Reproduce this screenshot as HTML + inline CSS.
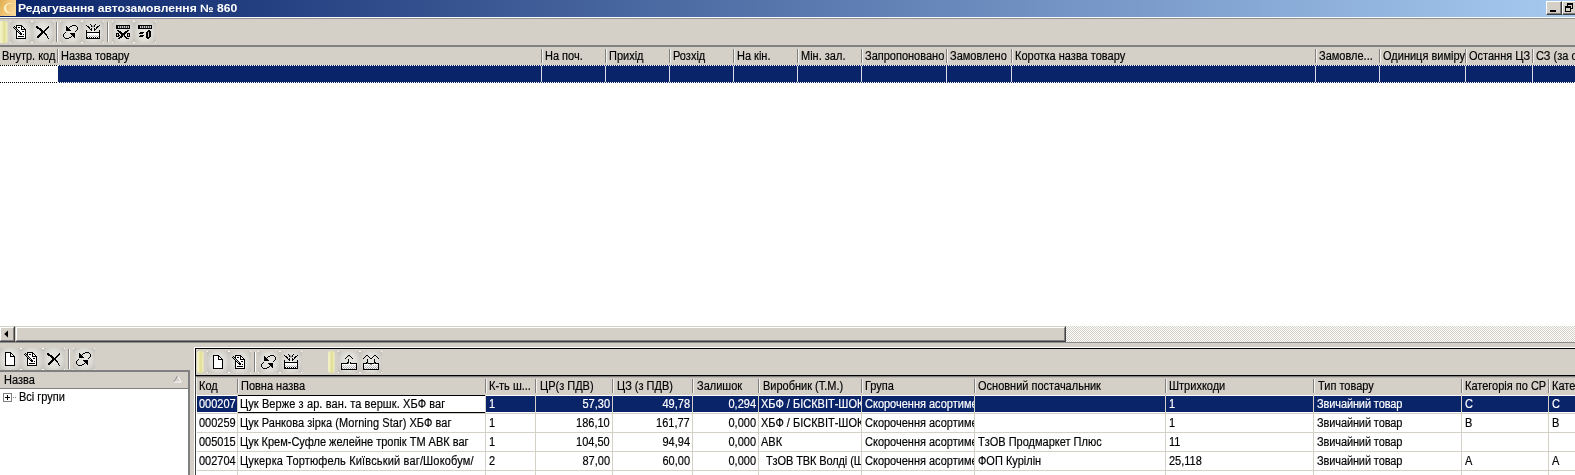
<!DOCTYPE html><html lang="uk"><head><meta charset="utf-8"><title>Редагування автозамовлення № 860</title><style>
*{margin:0;padding:0;box-sizing:border-box}
html,body{width:1575px;height:475px;overflow:hidden;background:#d4d0c8}
body{position:relative;font-family:"Liberation Sans","DejaVu Sans",sans-serif;font-size:11px;color:#000;line-height:13px}
.a{position:absolute}
.t{position:absolute;white-space:nowrap;height:13px;line-height:13px;overflow:hidden}
.w{color:#fff}
.s{display:inline-block;transform:scaleX(.9167);transform-origin:0 50%;font-size:12px;-webkit-text-stroke:0.18px currentColor}
.sr{display:inline-block;transform:scaleX(.9167);transform-origin:100% 50%;font-size:12px;-webkit-text-stroke:0.18px currentColor}
.btn{position:absolute;width:22px;height:22px;background:
 radial-gradient(circle at 0 0,#fff 0,#fff 1px,transparent 1.4px),
 radial-gradient(circle at 100% 0,#fff 0,#fff 1px,transparent 1.4px),
 radial-gradient(circle at 0 100%,#fff 0,#fff 1px,transparent 1.4px),
 radial-gradient(circle at 100% 100%,#fff 0,#fff 1px,transparent 1.4px),
 radial-gradient(ellipse 68% 85% at 50% 50%,#eae9e4 0,#e0ded8 45%,#c6c4bd 85%,#b9b7b0 100%)}
.btn svg{position:absolute;left:0;top:0;width:22px;height:22px}
.grip{position:absolute;width:8px;height:22px;border-radius:3px;background:linear-gradient(to right,#f3f1c8 0,#f0eebc 25%,#e4e29c 42%,#e2e098 65%,#eeecbc 82%,#dedbc2 100%)}
.sepv{position:absolute;width:2px;border-left:1px solid #808080;border-right:1px solid #fff}
.hsep{position:absolute;width:2px;height:14px;border-left:1px solid #808080;border-right:1px solid #f4f2ee}
.cell{position:absolute;height:18px;overflow:hidden;white-space:nowrap;line-height:18px;padding-top:0}
</style></head><body><div id="root" style="position:absolute;left:0;top:0;width:1575px;height:475px;overflow:hidden;will-change:transform">
<div class="a" style="left:0;top:0;width:1575px;height:17px;background:linear-gradient(to right,#0a246a 0,#a6caf0 100%)"></div>
<div class="a" style="left:0;top:17px;width:1575px;height:1px;background:#fff"></div>
<div class="a" style="left:0;top:18px;width:1575px;height:1px;background:#929292"></div>
<svg class="a" style="left:0;top:0" width="16" height="16" viewBox="0 0 16 16"><defs><linearGradient id="gi" x1="0" y1="0" x2="1" y2="0.4"><stop offset="0" stop-color="#e0ae50"/><stop offset="0.5" stop-color="#efc474"/><stop offset="1" stop-color="#f8d896"/></linearGradient></defs><rect width="16" height="16" fill="url(#gi)"/><path d="M12.4 3.3C7.6 2.2 4 5.2 4.1 8.4C4.2 11.8 7.8 14 11.8 12.6C8.4 13 6.1 11 6 8.3C5.9 5.6 8.2 3.4 12.4 3.3Z" fill="#fff6cc"/></svg>
<div class="t w" style="left:17.5px;top:2px;font-weight:bold;transform-origin:0 0;transform:scaleX(1.1)" id="title">Редагування автозамовлення № 860</div>
<div class="a" style="left:1546px;top:1px;width:16px;height:14px;background:#d4d0c8;border-top:1px solid #fff;border-left:1px solid #fff;border-right:1px solid #404040;border-bottom:1px solid #404040"><div class="a" style="left:0;top:0;right:0;bottom:0;border-right:1px solid #808080;border-bottom:1px solid #808080"></div><div class="a" style="left:3px;top:8px;width:6px;height:2px;background:#000"></div></div>
<div class="a" style="left:1562px;top:1px;width:16px;height:14px;background:#d4d0c8;border-top:1px solid #fff;border-left:1px solid #fff;border-right:1px solid #404040;border-bottom:1px solid #404040"><div class="a" style="left:0;top:0;right:0;bottom:0;border-right:1px solid #808080;border-bottom:1px solid #808080"></div><svg class="a" style="left:2px;top:1px" width="8" height="9" viewBox="0 0 8 9" shape-rendering="crispEdges"><path d="M2 0h6v2h-6zM2 2h1v1h-1zM7 2h1v4h-2v-1h1zM0 3h6v2h-6zM0 5h1v4h-1zM5 5h1v4h-1zM1 8h4v1h-4z" fill="#000"/></svg></div>
<div class="grip" style="left:0;top:21px;border-top-left-radius:0;border-bottom-left-radius:0"></div>
<div class="btn" style="left:10px;top:21px"><svg viewBox="0 0 22 22" shape-rendering="crispEdges"><path fill="#fff" d="M7 5h4v1h-4zM7 6h1v1h-1zM10 6h1v1h-1zM12 6h1v1h-1zM7 7h4v1h-4zM12 7h2v1h-2zM8 8h3v1h-3zM9 9h6v1h-6zM10 10h2v1h-2zM14 10h1v1h-1zM7 11h1v1h-1zM11 11h4v1h-4zM7 12h2v1h-2zM12 12h3v1h-3zM7 13h3v1h-3zM12 13h1v1h-1zM14 13h1v1h-1zM7 14h8v1h-8zM7 15h1v1h-1zM14 15h1v1h-1zM7 16h8v1h-8z"/><path fill="#c8c8c8" d="M4 6h1v1h-1zM5 7h1v1h-1zM6 8h1v1h-1zM7 9h1v1h-1zM8 10h1v1h-1zM9 11h1v1h-1z"/><path fill="#000" d="M6 4h6v1h-6zM4 5h1v1h-1zM6 5h1v1h-1zM11 5h2v1h-2zM3 6h1v1h-1zM5 6h2v1h-2zM8 6h2v1h-2zM11 6h1v1h-1zM13 6h1v1h-1zM4 7h1v1h-1zM6 7h1v1h-1zM11 7h1v1h-1zM14 7h1v1h-1zM5 8h1v1h-1zM7 8h1v1h-1zM11 8h5v1h-5zM6 9h1v1h-1zM8 9h1v1h-1zM15 9h1v1h-1zM6 10h2v1h-2zM9 10h1v1h-1zM12 10h2v1h-2zM15 10h1v1h-1zM6 11h1v1h-1zM8 11h1v1h-1zM10 11h1v1h-1zM15 11h1v1h-1zM6 12h1v1h-1zM9 12h3v1h-3zM15 12h1v1h-1zM6 13h1v1h-1zM10 13h2v1h-2zM13 13h1v1h-1zM15 13h1v1h-1zM6 14h1v1h-1zM15 14h1v1h-1zM6 15h1v1h-1zM8 15h6v1h-6zM15 15h1v1h-1zM6 16h1v1h-1zM15 16h1v1h-1zM6 17h10v1h-10z"/></svg></div>
<div class="btn" style="left:32px;top:21px"><svg viewBox="0 0 22 22" shape-rendering="crispEdges"><path fill="#000" d="M4 5h2v1h-2zM16 5h1v1h-1zM4 6h3v1h-3zM15 6h2v1h-2zM5 7h4v1h-4zM14 7h2v1h-2zM7 8h3v1h-3zM13 8h2v1h-2zM8 9h3v1h-3zM12 9h2v1h-2zM9 10h4v1h-4zM9 11h4v1h-4zM8 12h3v1h-3zM12 12h2v1h-2zM7 13h3v1h-3zM13 13h2v1h-2zM6 14h3v1h-3zM14 14h1v1h-1zM5 15h3v1h-3zM15 15h1v1h-1zM5 16h2v1h-2zM15 16h1v1h-1zM16 17h1v1h-1z"/></svg></div>
<div class="btn" style="left:60px;top:21px"><svg viewBox="0 0 22 22" shape-rendering="crispEdges"><path fill="#000" d="M12 4h4v1h-4zM6 5h1v1h-1zM10 5h2v1h-2zM16 5h1v1h-1zM6 6h2v1h-2zM9 6h1v1h-1zM17 6h1v1h-1zM6 7h3v1h-3zM17 7h1v1h-1zM6 8h4v1h-4zM17 8h1v1h-1zM6 9h5v1h-5zM16 9h1v1h-1zM15 10h1v1h-1zM5 11h1v1h-1zM4 12h1v1h-1zM10 12h5v1h-5zM3 13h1v1h-1zM11 13h4v1h-4zM3 14h1v1h-1zM12 14h3v1h-3zM3 15h1v1h-1zM11 15h1v1h-1zM13 15h2v1h-2zM4 16h1v1h-1zM9 16h2v1h-2zM14 16h1v1h-1zM5 17h4v1h-4z"/></svg></div>
<div class="btn" style="left:82px;top:21px"><svg viewBox="0 0 22 22" shape-rendering="crispEdges"><path fill="#fff" d="M10 10h2v1h-2zM5 12h12v1h-12zM5 13h12v1h-12zM6 14h1v1h-1zM8 14h1v1h-1zM10 14h1v1h-1zM12 14h1v1h-1zM14 14h1v1h-1zM16 14h1v1h-1zM5 15h1v1h-1zM7 15h1v1h-1zM9 15h1v1h-1zM11 15h1v1h-1zM13 15h1v1h-1zM15 15h1v1h-1zM6 16h1v1h-1zM8 16h1v1h-1zM10 16h1v1h-1zM12 16h1v1h-1zM14 16h1v1h-1zM16 16h1v1h-1z"/><path fill="#c8c8c8" d="M10 4h2v1h-2zM10 6h2v1h-2zM5 14h1v1h-1zM7 14h1v1h-1zM9 14h1v1h-1zM11 14h1v1h-1zM13 14h1v1h-1zM15 14h1v1h-1z"/><path fill="#a4a4a4" d="M6 15h1v1h-1zM8 15h1v1h-1zM10 15h1v1h-1zM12 15h1v1h-1zM14 15h1v1h-1zM16 15h1v1h-1z"/><path fill="#808080" d="M10 5h2v1h-2z"/><path fill="#000" d="M8 3h1v1h-1zM13 3h1v1h-1zM4 4h1v1h-1zM9 4h1v1h-1zM12 4h1v1h-1zM17 4h1v1h-1zM5 5h2v1h-2zM9 5h1v1h-1zM12 5h1v1h-1zM15 5h2v1h-2zM6 6h2v1h-2zM14 6h2v1h-2zM7 7h1v1h-1zM9 7h1v1h-1zM12 7h1v1h-1zM14 7h1v1h-1zM8 8h2v1h-2zM12 8h2v1h-2zM4 9h1v1h-1zM9 9h1v1h-1zM12 9h1v1h-1zM17 9h1v1h-1zM4 10h1v1h-1zM17 10h1v1h-1zM4 11h14v1h-14zM4 12h1v1h-1zM17 12h1v1h-1zM4 13h1v1h-1zM17 13h1v1h-1zM4 14h1v1h-1zM17 14h1v1h-1zM4 15h1v1h-1zM17 15h1v1h-1zM4 16h2v1h-2zM7 16h1v1h-1zM9 16h1v1h-1zM11 16h1v1h-1zM13 16h1v1h-1zM15 16h1v1h-1zM17 16h1v1h-1zM4 17h14v1h-14z"/></svg></div>
<div class="btn" style="left:112px;top:21px"><svg viewBox="0 0 22 22" shape-rendering="crispEdges"><path fill="#c8c8c8" d="M6 5h1v1h-1zM8 5h1v1h-1zM10 5h1v1h-1zM12 5h1v1h-1zM14 5h1v1h-1zM16 5h1v1h-1zM6 6h1v1h-1zM8 6h1v1h-1zM10 6h1v1h-1zM12 6h1v1h-1zM14 6h1v1h-1zM16 6h1v1h-1zM5 13h1v1h-1zM16 13h1v1h-1zM5 14h1v1h-1zM16 14h1v1h-1z"/><path fill="#808080" d="M11 14h1v1h-1z"/><path fill="#404040" d="M7 5h1v1h-1zM9 5h1v1h-1zM11 5h1v1h-1zM13 5h1v1h-1zM15 5h1v1h-1zM7 6h1v1h-1zM9 6h1v1h-1zM11 6h1v1h-1zM13 6h1v1h-1zM15 6h1v1h-1z"/><path fill="#000" d="M4 4h14v1h-14zM4 5h2v1h-2zM17 5h1v1h-1zM4 6h2v1h-2zM17 6h1v1h-1zM4 7h14v1h-14zM5 9h2v1h-2zM15 9h2v1h-2zM6 10h3v1h-3zM13 10h3v1h-3zM7 11h3v1h-3zM12 11h3v1h-3zM4 12h3v1h-3zM8 12h6v1h-6zM15 12h3v1h-3zM4 13h1v1h-1zM6 13h1v1h-1zM9 13h4v1h-4zM15 13h1v1h-1zM17 13h1v1h-1zM4 14h1v1h-1zM6 14h2v1h-2zM9 14h2v1h-2zM12 14h1v1h-1zM15 14h1v1h-1zM17 14h1v1h-1zM4 15h3v1h-3zM8 15h3v1h-3zM12 15h2v1h-2zM15 15h3v1h-3zM7 16h3v1h-3zM13 16h2v1h-2zM6 17h2v1h-2zM14 17h3v1h-3z"/></svg></div>
<div class="btn" style="left:134px;top:21px"><svg viewBox="0 0 22 22" shape-rendering="crispEdges"><path fill="#c8c8c8" d="M6 5h1v1h-1zM8 5h1v1h-1zM10 5h1v1h-1zM12 5h1v1h-1zM14 5h1v1h-1zM16 5h1v1h-1zM6 6h1v1h-1zM8 6h1v1h-1zM10 6h1v1h-1zM12 6h1v1h-1zM14 6h1v1h-1zM16 6h1v1h-1zM14 11h1v1h-1zM14 12h1v1h-1zM14 13h1v1h-1zM14 14h1v1h-1zM14 15h1v1h-1z"/><path fill="#404040" d="M7 5h1v1h-1zM9 5h1v1h-1zM11 5h1v1h-1zM13 5h1v1h-1zM15 5h1v1h-1zM7 6h1v1h-1zM9 6h1v1h-1zM11 6h1v1h-1zM13 6h1v1h-1zM15 6h1v1h-1z"/><path fill="#000" d="M4 4h14v1h-14zM4 5h2v1h-2zM17 5h1v1h-1zM4 6h2v1h-2zM17 6h1v1h-1zM4 7h14v1h-14zM14 9h2v1h-2zM13 10h4v1h-4zM6 11h4v1h-4zM12 11h2v1h-2zM15 11h2v1h-2zM5 12h4v1h-4zM12 12h2v1h-2zM15 12h2v1h-2zM12 13h2v1h-2zM15 13h2v1h-2zM6 14h4v1h-4zM12 14h2v1h-2zM15 14h2v1h-2zM5 15h4v1h-4zM12 15h2v1h-2zM15 15h2v1h-2zM12 16h4v1h-4zM13 17h2v1h-2z"/></svg></div>
<div class="sepv" style="left:56px;top:22px;height:20px"></div>
<div class="sepv" style="left:107px;top:22px;height:20px"></div>
<div class="a" style="left:0;top:45px;width:1575px;height:2px;background:#808080"></div>
<div class="a" style="left:0;top:47px;width:1575px;height:18px;background:#d4d0c8"></div>
<div class="t" id="th0" style="left:2px;top:50px;width:55px"><span class="s">Внутр. код</span></div>
<div class="t" id="th1" style="left:61px;top:50px;width:480px"><span class="s">Назва товару</span></div>
<div class="t" id="th2" style="left:545px;top:50px;width:60px"><span class="s">На поч.</span></div>
<div class="t" id="th3" style="left:609px;top:50px;width:60px"><span class="s">Прихід</span></div>
<div class="t" id="th4" style="left:673px;top:50px;width:60px"><span class="s">Розхід</span></div>
<div class="t" id="th5" style="left:737px;top:50px;width:60px"><span class="s">На кін.</span></div>
<div class="t" id="th6" style="left:801px;top:50px;width:60px"><span class="s">Мін. зал.</span></div>
<div class="t" id="th7" style="left:865px;top:50px;width:81px"><span class="s">Запропоновано</span></div>
<div class="t" id="th8" style="left:950px;top:50px;width:61px"><span class="s">Замовлено</span></div>
<div class="t" id="th9" style="left:1015px;top:50px;width:300px"><span class="s">Коротка назва товару</span></div>
<div class="t" id="th10" style="left:1319px;top:50px;width:60px"><span class="s">Замовле...</span></div>
<div class="t" id="th11" style="left:1383px;top:50px;width:82px"><span class="s">Одиниця виміру</span></div>
<div class="t" id="th12" style="left:1469px;top:50px;width:63px"><span class="s">Остання ЦЗ</span></div>
<div class="t" id="th13" style="left:1536px;top:50px;width:64px"><span class="s">СЗ (за ост. 3 міс.)</span></div>
<div class="hsep" style="left:57px;top:49px"></div>
<div class="hsep" style="left:541px;top:49px"></div>
<div class="hsep" style="left:605px;top:49px"></div>
<div class="hsep" style="left:669px;top:49px"></div>
<div class="hsep" style="left:733px;top:49px"></div>
<div class="hsep" style="left:797px;top:49px"></div>
<div class="hsep" style="left:861px;top:49px"></div>
<div class="hsep" style="left:946px;top:49px"></div>
<div class="hsep" style="left:1011px;top:49px"></div>
<div class="hsep" style="left:1315px;top:49px"></div>
<div class="hsep" style="left:1379px;top:49px"></div>
<div class="hsep" style="left:1465px;top:49px"></div>
<div class="hsep" style="left:1532px;top:49px"></div>
<div class="a" style="left:0;top:65px;width:1575px;height:261px;background:#fff"></div>
<div class="a" style="left:58px;top:65px;width:1517px;height:18px;background:#0a246a"></div>
<div class="a" style="left:541px;top:66px;width:1px;height:16px;background:#dcdde4"></div>
<div class="a" style="left:605px;top:66px;width:1px;height:16px;background:#dcdde4"></div>
<div class="a" style="left:669px;top:66px;width:1px;height:16px;background:#dcdde4"></div>
<div class="a" style="left:733px;top:66px;width:1px;height:16px;background:#dcdde4"></div>
<div class="a" style="left:797px;top:66px;width:1px;height:16px;background:#dcdde4"></div>
<div class="a" style="left:861px;top:66px;width:1px;height:16px;background:#dcdde4"></div>
<div class="a" style="left:946px;top:66px;width:1px;height:16px;background:#dcdde4"></div>
<div class="a" style="left:1011px;top:66px;width:1px;height:16px;background:#dcdde4"></div>
<div class="a" style="left:1315px;top:66px;width:1px;height:16px;background:#dcdde4"></div>
<div class="a" style="left:1379px;top:66px;width:1px;height:16px;background:#dcdde4"></div>
<div class="a" style="left:1465px;top:66px;width:1px;height:16px;background:#dcdde4"></div>
<div class="a" style="left:1532px;top:66px;width:1px;height:16px;background:#dcdde4"></div>
<div class="a" style="left:0;top:65px;width:58px;height:1px;background:repeating-linear-gradient(to right,#000 0,#000 1px,#fff 1px,#fff 2px)"></div>
<div class="a" style="left:58px;top:65px;width:1517px;height:1px;background:repeating-linear-gradient(to right,#fff 0,#fff 1px,#0a246a 1px,#0a246a 2px)"></div>
<div class="a" style="left:0;top:82px;width:58px;height:1px;background:repeating-linear-gradient(to right,#000 0,#000 1px,#fff 1px,#fff 2px)"></div>
<div class="a" style="left:58px;top:82px;width:1517px;height:1px;background:repeating-linear-gradient(to right,#fff 0,#fff 1px,#0a246a 1px,#0a246a 2px)"></div>
<div class="a" style="left:0;top:326px;width:1575px;height:16px;background:repeating-conic-gradient(#fff 0 25%,#d4d0c8 0 50%) 0 0/2px 2px"></div>
<div class="a" style="left:-1px;top:326px;width:16px;height:16px;background:#d4d0c8;border-top:1px solid #d4d0c8;border-left:1px solid #d4d0c8;border-right:1px solid #404040;border-bottom:1px solid #404040"><div class="a" style="left:0;top:0;right:0;bottom:0;border-top:1px solid #fff;border-left:1px solid #fff;border-right:1px solid #808080;border-bottom:1px solid #808080"></div><svg class="a" style="left:3px;top:3px" width="8" height="8" viewBox="0 0 8 8"><path d="M5 0.5V7.5L1.2 4Z" fill="#000"/></svg></div>
<div class="a" style="left:15px;top:326px;width:1051px;height:16px;background:#d4d0c8;border-top:1px solid #d4d0c8;border-left:1px solid #d4d0c8;border-right:1px solid #404040;border-bottom:1px solid #404040"><div class="a" style="left:0;top:0;right:0;bottom:0;border-top:1px solid #fff;border-left:1px solid #fff;border-right:1px solid #808080;border-bottom:1px solid #808080"></div></div>
<div class="a" style="left:0;top:342px;width:1575px;height:1px;background:#8c8c8c"></div>
<div class="btn" style="left:-1px;top:348px"><svg viewBox="0 0 22 22" shape-rendering="crispEdges"><path fill="#fff" d="M7 5h4v1h-4zM7 6h4v1h-4zM12 6h1v1h-1zM7 7h4v1h-4zM12 7h2v1h-2zM7 8h4v1h-4zM7 9h8v1h-8zM7 10h8v1h-8zM7 11h8v1h-8zM7 12h8v1h-8zM7 13h8v1h-8zM7 14h8v1h-8zM7 15h8v1h-8zM7 16h8v1h-8z"/><path fill="#000" d="M6 4h6v1h-6zM6 5h1v1h-1zM11 5h2v1h-2zM6 6h1v1h-1zM11 6h1v1h-1zM13 6h1v1h-1zM6 7h1v1h-1zM11 7h1v1h-1zM14 7h1v1h-1zM6 8h1v1h-1zM11 8h5v1h-5zM6 9h1v1h-1zM15 9h1v1h-1zM6 10h1v1h-1zM15 10h1v1h-1zM6 11h1v1h-1zM15 11h1v1h-1zM6 12h1v1h-1zM15 12h1v1h-1zM6 13h1v1h-1zM15 13h1v1h-1zM6 14h1v1h-1zM15 14h1v1h-1zM6 15h1v1h-1zM15 15h1v1h-1zM6 16h1v1h-1zM15 16h1v1h-1zM6 17h10v1h-10z"/></svg></div>
<div class="btn" style="left:21px;top:348px"><svg viewBox="0 0 22 22" shape-rendering="crispEdges"><path fill="#fff" d="M7 5h4v1h-4zM7 6h1v1h-1zM10 6h1v1h-1zM12 6h1v1h-1zM7 7h4v1h-4zM12 7h2v1h-2zM8 8h3v1h-3zM9 9h6v1h-6zM10 10h2v1h-2zM14 10h1v1h-1zM7 11h1v1h-1zM11 11h4v1h-4zM7 12h2v1h-2zM12 12h3v1h-3zM7 13h3v1h-3zM12 13h1v1h-1zM14 13h1v1h-1zM7 14h8v1h-8zM7 15h1v1h-1zM14 15h1v1h-1zM7 16h8v1h-8z"/><path fill="#c8c8c8" d="M4 6h1v1h-1zM5 7h1v1h-1zM6 8h1v1h-1zM7 9h1v1h-1zM8 10h1v1h-1zM9 11h1v1h-1z"/><path fill="#000" d="M6 4h6v1h-6zM4 5h1v1h-1zM6 5h1v1h-1zM11 5h2v1h-2zM3 6h1v1h-1zM5 6h2v1h-2zM8 6h2v1h-2zM11 6h1v1h-1zM13 6h1v1h-1zM4 7h1v1h-1zM6 7h1v1h-1zM11 7h1v1h-1zM14 7h1v1h-1zM5 8h1v1h-1zM7 8h1v1h-1zM11 8h5v1h-5zM6 9h1v1h-1zM8 9h1v1h-1zM15 9h1v1h-1zM6 10h2v1h-2zM9 10h1v1h-1zM12 10h2v1h-2zM15 10h1v1h-1zM6 11h1v1h-1zM8 11h1v1h-1zM10 11h1v1h-1zM15 11h1v1h-1zM6 12h1v1h-1zM9 12h3v1h-3zM15 12h1v1h-1zM6 13h1v1h-1zM10 13h2v1h-2zM13 13h1v1h-1zM15 13h1v1h-1zM6 14h1v1h-1zM15 14h1v1h-1zM6 15h1v1h-1zM8 15h6v1h-6zM15 15h1v1h-1zM6 16h1v1h-1zM15 16h1v1h-1zM6 17h10v1h-10z"/></svg></div>
<div class="btn" style="left:43px;top:348px"><svg viewBox="0 0 22 22" shape-rendering="crispEdges"><path fill="#000" d="M4 5h2v1h-2zM16 5h1v1h-1zM4 6h3v1h-3zM15 6h2v1h-2zM5 7h4v1h-4zM14 7h2v1h-2zM7 8h3v1h-3zM13 8h2v1h-2zM8 9h3v1h-3zM12 9h2v1h-2zM9 10h4v1h-4zM9 11h4v1h-4zM8 12h3v1h-3zM12 12h2v1h-2zM7 13h3v1h-3zM13 13h2v1h-2zM6 14h3v1h-3zM14 14h1v1h-1zM5 15h3v1h-3zM15 15h1v1h-1zM5 16h2v1h-2zM15 16h1v1h-1zM16 17h1v1h-1z"/></svg></div>
<div class="btn" style="left:73px;top:348px"><svg viewBox="0 0 22 22" shape-rendering="crispEdges"><path fill="#000" d="M12 4h4v1h-4zM6 5h1v1h-1zM10 5h2v1h-2zM16 5h1v1h-1zM6 6h2v1h-2zM9 6h1v1h-1zM17 6h1v1h-1zM6 7h3v1h-3zM17 7h1v1h-1zM6 8h4v1h-4zM17 8h1v1h-1zM6 9h5v1h-5zM16 9h1v1h-1zM15 10h1v1h-1zM5 11h1v1h-1zM4 12h1v1h-1zM10 12h5v1h-5zM3 13h1v1h-1zM11 13h4v1h-4zM3 14h1v1h-1zM12 14h3v1h-3zM3 15h1v1h-1zM11 15h1v1h-1zM13 15h2v1h-2zM4 16h1v1h-1zM9 16h2v1h-2zM14 16h1v1h-1zM5 17h4v1h-4z"/></svg></div>
<div class="sepv" style="left:68px;top:349px;height:20px"></div>
<div class="a" style="left:0;top:370px;width:190px;height:110px;background:#fff;border-top:2px solid #808080;border-right:2px solid #808080"></div>
<div class="a" style="left:0;top:372px;width:188px;height:16px;background:#d4d0c8"></div>
<div class="a" style="left:0;top:388px;width:188px;height:1px;background:#808080"></div>
<div class="t" id="tn" style="left:4px;top:374px"><span class="s">Назва</span></div>
<svg class="a" style="left:173px;top:375px" width="9" height="8" viewBox="0 0 9 8"><path d="M4.5 0.8L8.2 7H0.8Z" fill="#d4d0c8" stroke="#fff" stroke-width="1"/><path d="M4.5 0.8L0.8 7" stroke="#808080" stroke-width="1" fill="none"/></svg>
<div class="a" style="left:3px;top:393px;width:9px;height:9px;border:1px solid #808080;background:#fff"><div class="a" style="left:1px;top:3px;width:5px;height:1px;background:#000"></div><div class="a" style="left:3px;top:1px;width:1px;height:5px;background:#000"></div></div>
<div class="a" style="left:13px;top:397px;width:4px;height:1px;background:repeating-linear-gradient(to right,#808080 0,#808080 1px,#fff 1px,#fff 2px)"></div>
<div class="t" id="tg" style="left:19px;top:391px"><span class="s">Всі групи</span></div>
<div class="a" style="left:194px;top:347px;width:1400px;height:140px;border-left:1px solid #fff;border-top:1px solid #fff"></div>
<div class="a" style="left:195px;top:348px;width:1400px;height:28px;border-left:1px solid #000;border-top:1px solid #000;border-bottom:1px solid #000"></div>
<div class="a" style="left:195px;top:376px;width:1px;height:100px;background:#404040"></div>
<div class="a" style="left:196px;top:394px;width:1px;height:100px;background:#fff"></div>
<div class="grip" style="left:197px;top:351px;width:7px;height:22px"></div>
<div class="btn" style="left:207px;top:351px"><svg viewBox="0 0 22 22" shape-rendering="crispEdges"><path fill="#fff" d="M7 5h4v1h-4zM7 6h4v1h-4zM12 6h1v1h-1zM7 7h4v1h-4zM12 7h2v1h-2zM7 8h4v1h-4zM7 9h8v1h-8zM7 10h8v1h-8zM7 11h8v1h-8zM7 12h8v1h-8zM7 13h8v1h-8zM7 14h8v1h-8zM7 15h8v1h-8zM7 16h8v1h-8z"/><path fill="#000" d="M6 4h6v1h-6zM6 5h1v1h-1zM11 5h2v1h-2zM6 6h1v1h-1zM11 6h1v1h-1zM13 6h1v1h-1zM6 7h1v1h-1zM11 7h1v1h-1zM14 7h1v1h-1zM6 8h1v1h-1zM11 8h5v1h-5zM6 9h1v1h-1zM15 9h1v1h-1zM6 10h1v1h-1zM15 10h1v1h-1zM6 11h1v1h-1zM15 11h1v1h-1zM6 12h1v1h-1zM15 12h1v1h-1zM6 13h1v1h-1zM15 13h1v1h-1zM6 14h1v1h-1zM15 14h1v1h-1zM6 15h1v1h-1zM15 15h1v1h-1zM6 16h1v1h-1zM15 16h1v1h-1zM6 17h10v1h-10z"/></svg></div>
<div class="btn" style="left:229px;top:351px"><svg viewBox="0 0 22 22" shape-rendering="crispEdges"><path fill="#fff" d="M7 5h4v1h-4zM7 6h1v1h-1zM10 6h1v1h-1zM12 6h1v1h-1zM7 7h4v1h-4zM12 7h2v1h-2zM8 8h3v1h-3zM9 9h6v1h-6zM10 10h2v1h-2zM14 10h1v1h-1zM7 11h1v1h-1zM11 11h4v1h-4zM7 12h2v1h-2zM12 12h3v1h-3zM7 13h3v1h-3zM12 13h1v1h-1zM14 13h1v1h-1zM7 14h8v1h-8zM7 15h1v1h-1zM14 15h1v1h-1zM7 16h8v1h-8z"/><path fill="#c8c8c8" d="M4 6h1v1h-1zM5 7h1v1h-1zM6 8h1v1h-1zM7 9h1v1h-1zM8 10h1v1h-1zM9 11h1v1h-1z"/><path fill="#000" d="M6 4h6v1h-6zM4 5h1v1h-1zM6 5h1v1h-1zM11 5h2v1h-2zM3 6h1v1h-1zM5 6h2v1h-2zM8 6h2v1h-2zM11 6h1v1h-1zM13 6h1v1h-1zM4 7h1v1h-1zM6 7h1v1h-1zM11 7h1v1h-1zM14 7h1v1h-1zM5 8h1v1h-1zM7 8h1v1h-1zM11 8h5v1h-5zM6 9h1v1h-1zM8 9h1v1h-1zM15 9h1v1h-1zM6 10h2v1h-2zM9 10h1v1h-1zM12 10h2v1h-2zM15 10h1v1h-1zM6 11h1v1h-1zM8 11h1v1h-1zM10 11h1v1h-1zM15 11h1v1h-1zM6 12h1v1h-1zM9 12h3v1h-3zM15 12h1v1h-1zM6 13h1v1h-1zM10 13h2v1h-2zM13 13h1v1h-1zM15 13h1v1h-1zM6 14h1v1h-1zM15 14h1v1h-1zM6 15h1v1h-1zM8 15h6v1h-6zM15 15h1v1h-1zM6 16h1v1h-1zM15 16h1v1h-1zM6 17h10v1h-10z"/></svg></div>
<div class="btn" style="left:258px;top:351px"><svg viewBox="0 0 22 22" shape-rendering="crispEdges"><path fill="#000" d="M12 4h4v1h-4zM6 5h1v1h-1zM10 5h2v1h-2zM16 5h1v1h-1zM6 6h2v1h-2zM9 6h1v1h-1zM17 6h1v1h-1zM6 7h3v1h-3zM17 7h1v1h-1zM6 8h4v1h-4zM17 8h1v1h-1zM6 9h5v1h-5zM16 9h1v1h-1zM15 10h1v1h-1zM5 11h1v1h-1zM4 12h1v1h-1zM10 12h5v1h-5zM3 13h1v1h-1zM11 13h4v1h-4zM3 14h1v1h-1zM12 14h3v1h-3zM3 15h1v1h-1zM11 15h1v1h-1zM13 15h2v1h-2zM4 16h1v1h-1zM9 16h2v1h-2zM14 16h1v1h-1zM5 17h4v1h-4z"/></svg></div>
<div class="btn" style="left:280px;top:351px"><svg viewBox="0 0 22 22" shape-rendering="crispEdges"><path fill="#fff" d="M10 10h2v1h-2zM5 12h12v1h-12zM5 13h12v1h-12zM6 14h1v1h-1zM8 14h1v1h-1zM10 14h1v1h-1zM12 14h1v1h-1zM14 14h1v1h-1zM16 14h1v1h-1zM5 15h1v1h-1zM7 15h1v1h-1zM9 15h1v1h-1zM11 15h1v1h-1zM13 15h1v1h-1zM15 15h1v1h-1zM6 16h1v1h-1zM8 16h1v1h-1zM10 16h1v1h-1zM12 16h1v1h-1zM14 16h1v1h-1zM16 16h1v1h-1z"/><path fill="#c8c8c8" d="M10 4h2v1h-2zM10 6h2v1h-2zM5 14h1v1h-1zM7 14h1v1h-1zM9 14h1v1h-1zM11 14h1v1h-1zM13 14h1v1h-1zM15 14h1v1h-1z"/><path fill="#a4a4a4" d="M6 15h1v1h-1zM8 15h1v1h-1zM10 15h1v1h-1zM12 15h1v1h-1zM14 15h1v1h-1zM16 15h1v1h-1z"/><path fill="#808080" d="M10 5h2v1h-2z"/><path fill="#000" d="M8 3h1v1h-1zM13 3h1v1h-1zM4 4h1v1h-1zM9 4h1v1h-1zM12 4h1v1h-1zM17 4h1v1h-1zM5 5h2v1h-2zM9 5h1v1h-1zM12 5h1v1h-1zM15 5h2v1h-2zM6 6h2v1h-2zM14 6h2v1h-2zM7 7h1v1h-1zM9 7h1v1h-1zM12 7h1v1h-1zM14 7h1v1h-1zM8 8h2v1h-2zM12 8h2v1h-2zM4 9h1v1h-1zM9 9h1v1h-1zM12 9h1v1h-1zM17 9h1v1h-1zM4 10h1v1h-1zM17 10h1v1h-1zM4 11h14v1h-14zM4 12h1v1h-1zM17 12h1v1h-1zM4 13h1v1h-1zM17 13h1v1h-1zM4 14h1v1h-1zM17 14h1v1h-1zM4 15h1v1h-1zM17 15h1v1h-1zM4 16h2v1h-2zM7 16h1v1h-1zM9 16h1v1h-1zM11 16h1v1h-1zM13 16h1v1h-1zM15 16h1v1h-1zM17 16h1v1h-1zM4 17h14v1h-14z"/></svg></div>
<div class="sepv" style="left:254px;top:352px;height:20px"></div>
<div class="grip" style="left:328px;top:351px;width:7px;height:22px"></div>
<div class="btn" style="left:338px;top:351px"><svg viewBox="0 0 22 22" shape-rendering="crispEdges"><path fill="#fff" d="M11 12h1v1h-1zM4 13h14v1h-14zM4 14h1v1h-1zM6 14h1v1h-1zM8 14h1v1h-1zM10 14h1v1h-1zM12 14h1v1h-1zM14 14h1v1h-1zM16 14h1v1h-1zM5 15h1v1h-1zM7 15h1v1h-1zM9 15h1v1h-1zM11 15h1v1h-1zM13 15h1v1h-1zM15 15h1v1h-1zM17 15h1v1h-1zM4 16h1v1h-1zM6 16h1v1h-1zM8 16h1v1h-1zM10 16h1v1h-1zM12 16h1v1h-1zM14 16h1v1h-1zM16 16h1v1h-1zM5 17h1v1h-1zM7 17h1v1h-1zM9 17h1v1h-1zM11 17h1v1h-1zM13 17h1v1h-1zM15 17h1v1h-1zM17 17h1v1h-1z"/><path fill="#c8c8c8" d="M10 5h2v1h-2zM5 14h1v1h-1zM7 14h1v1h-1zM9 14h1v1h-1zM11 14h1v1h-1zM13 14h1v1h-1zM15 14h1v1h-1zM17 14h1v1h-1zM4 15h1v1h-1zM6 15h1v1h-1zM8 15h1v1h-1zM10 15h1v1h-1zM12 15h1v1h-1zM14 15h1v1h-1zM16 15h1v1h-1z"/><path fill="#a4a4a4" d="M5 16h1v1h-1zM7 16h1v1h-1zM9 16h1v1h-1zM11 16h1v1h-1zM13 16h1v1h-1zM15 16h1v1h-1zM17 16h1v1h-1zM4 17h1v1h-1zM6 17h1v1h-1zM8 17h1v1h-1zM10 17h1v1h-1zM12 17h1v1h-1zM14 17h1v1h-1zM16 17h1v1h-1z"/><path fill="#808080" d="M10 12h1v1h-1z"/><path fill="#000" d="M10 4h2v1h-2zM9 5h1v1h-1zM12 5h1v1h-1zM8 6h1v1h-1zM13 6h1v1h-1zM7 7h1v1h-1zM14 7h1v1h-1zM10 8h1v1h-1zM10 9h1v1h-1zM10 10h1v1h-1zM9 11h2v1h-2zM12 11h1v1h-1zM3 12h7v1h-7zM12 12h7v1h-7zM3 13h1v1h-1zM18 13h1v1h-1zM3 14h1v1h-1zM18 14h1v1h-1zM3 15h1v1h-1zM18 15h1v1h-1zM3 16h1v1h-1zM18 16h1v1h-1zM3 17h1v1h-1zM18 17h1v1h-1zM3 18h16v1h-16z"/></svg></div>
<div class="btn" style="left:360px;top:351px"><svg viewBox="0 0 22 22" shape-rendering="crispEdges"><path fill="#fff" d="M4 13h6v1h-6zM12 13h6v1h-6zM4 14h1v1h-1zM6 14h1v1h-1zM8 14h1v1h-1zM10 14h1v1h-1zM12 14h1v1h-1zM14 14h1v1h-1zM16 14h1v1h-1zM5 15h1v1h-1zM7 15h1v1h-1zM9 15h1v1h-1zM11 15h1v1h-1zM13 15h1v1h-1zM15 15h1v1h-1zM17 15h1v1h-1zM4 16h1v1h-1zM6 16h1v1h-1zM8 16h1v1h-1zM10 16h1v1h-1zM12 16h1v1h-1zM14 16h1v1h-1zM16 16h1v1h-1zM5 17h1v1h-1zM7 17h1v1h-1zM9 17h1v1h-1zM11 17h1v1h-1zM13 17h1v1h-1zM15 17h1v1h-1zM17 17h1v1h-1z"/><path fill="#c8c8c8" d="M5 14h1v1h-1zM7 14h1v1h-1zM9 14h1v1h-1zM11 14h1v1h-1zM13 14h1v1h-1zM15 14h1v1h-1zM17 14h1v1h-1zM4 15h1v1h-1zM6 15h1v1h-1zM8 15h1v1h-1zM10 15h1v1h-1zM12 15h1v1h-1zM14 15h1v1h-1zM16 15h1v1h-1z"/><path fill="#a4a4a4" d="M5 16h1v1h-1zM7 16h1v1h-1zM9 16h1v1h-1zM11 16h1v1h-1zM13 16h1v1h-1zM15 16h1v1h-1zM17 16h1v1h-1zM4 17h1v1h-1zM6 17h1v1h-1zM8 17h1v1h-1zM10 17h1v1h-1zM12 17h1v1h-1zM14 17h1v1h-1zM16 17h1v1h-1z"/><path fill="#808080" d="M7 12h1v1h-1zM14 12h1v1h-1zM10 13h2v1h-2z"/><path fill="#000" d="M6 4h2v1h-2zM14 4h2v1h-2zM5 5h1v1h-1zM8 5h1v1h-1zM13 5h1v1h-1zM16 5h1v1h-1zM4 6h1v1h-1zM9 6h1v1h-1zM12 6h1v1h-1zM17 6h1v1h-1zM3 7h1v1h-1zM10 7h2v1h-2zM18 7h1v1h-1zM7 8h1v1h-1zM14 8h1v1h-1zM7 9h1v1h-1zM14 9h1v1h-1zM7 10h1v1h-1zM14 10h1v1h-1zM6 11h2v1h-2zM14 11h2v1h-2zM3 12h4v1h-4zM8 12h6v1h-6zM15 12h4v1h-4zM3 13h1v1h-1zM18 13h1v1h-1zM3 14h1v1h-1zM18 14h1v1h-1zM3 15h1v1h-1zM18 15h1v1h-1zM3 16h1v1h-1zM18 16h1v1h-1zM3 17h1v1h-1zM18 17h1v1h-1zM3 18h16v1h-16z"/></svg></div>
<div class="a" style="left:197px;top:376px;width:1378px;height:18px;background:#d4d0c8"></div>
<div class="a" style="left:196px;top:376px;width:1379px;height:1px;background:#808080"></div>
<div class="a" style="left:196px;top:377px;width:1px;height:17px;background:#ece9e2"></div>
<div class="a" style="left:197px;top:377px;width:1378px;height:1px;background:#bcb8b0"></div>
<div class="a" style="left:197px;top:394px;width:1378px;height:81px;background:#fff"></div>
<div class="t" id="bh0" style="left:199px;top:380px;width:38px"><span class="s">Код</span></div>
<div class="t" id="bh1" style="left:241px;top:380px;width:244px"><span class="s">Повна назва</span></div>
<div class="t" id="bh2" style="left:489px;top:380px;width:46px"><span class="s">К-ть ш...</span></div>
<div class="t" id="bh3" style="left:540px;top:380px;width:72px"><span class="s">ЦР(з ПДВ)</span></div>
<div class="t" id="bh4" style="left:617px;top:380px;width:75px"><span class="s">ЦЗ (з ПДВ)</span></div>
<div class="t" id="bh5" style="left:697px;top:380px;width:61px"><span class="s">Залишок</span></div>
<div class="t" id="bh6" style="left:763px;top:380px;width:98px"><span class="s">Виробник (Т.М.)</span></div>
<div class="t" id="bh7" style="left:865px;top:380px;width:109px"><span class="s">Група</span></div>
<div class="t" id="bh8" style="left:978px;top:380px;width:187px"><span class="s">Основний постачальник</span></div>
<div class="t" id="bh9" style="left:1169px;top:380px;width:144px"><span class="s">Штрихкоди</span></div>
<div class="t" id="bh10" style="left:1318px;top:380px;width:143px"><span class="s">Тип товару</span></div>
<div class="t" id="bh11" style="left:1465px;top:380px;width:83px"><span class="s">Категорія по СР</span></div>
<div class="t" id="bh12" style="left:1552px;top:380px;width:48px"><span class="s">Категорія</span></div>
<div class="hsep" style="left:237px;top:379px"></div>
<div class="hsep" style="left:485px;top:379px"></div>
<div class="hsep" style="left:535px;top:379px"></div>
<div class="hsep" style="left:612px;top:379px"></div>
<div class="hsep" style="left:692px;top:379px"></div>
<div class="hsep" style="left:758px;top:379px"></div>
<div class="hsep" style="left:861px;top:379px"></div>
<div class="hsep" style="left:974px;top:379px"></div>
<div class="hsep" style="left:1165px;top:379px"></div>
<div class="hsep" style="left:1313px;top:379px"></div>
<div class="hsep" style="left:1461px;top:379px"></div>
<div class="hsep" style="left:1548px;top:379px"></div>
<div class="a" style="left:197px;top:396px;width:1378px;height:16px;background:#0a246a"></div>
<div class="cell w" id="c0_0" style="left:197px;top:395px;width:40px;background:linear-gradient(#fff 0,#fff 1px,transparent 1px,transparent 17px,#fff 17px);padding-left:2px;"><span class="s">000207</span></div>
<div class="cell" id="c0_1" style="left:238px;top:395px;width:247px;background:#fff;padding-left:2px;letter-spacing:0.11px;"><span class="s">Цук Верже з ар. ван. та вершк. ХБФ ваг</span></div>
<div class="cell w" id="c0_2" style="left:486px;top:395px;width:49px;background:linear-gradient(#fff 0,#fff 1px,transparent 1px,transparent 17px,#fff 17px);padding-left:3px;"><span class="s">1</span></div>
<div class="cell w" id="c0_3" style="left:536px;top:395px;width:76px;background:linear-gradient(#fff 0,#fff 1px,transparent 1px,transparent 17px,#fff 17px);text-align:right;padding-right:2px;"><span class="sr">57,30</span></div>
<div class="cell w" id="c0_4" style="left:613px;top:395px;width:79px;background:linear-gradient(#fff 0,#fff 1px,transparent 1px,transparent 17px,#fff 17px);text-align:right;padding-right:2px;"><span class="sr">49,78</span></div>
<div class="cell w" id="c0_5" style="left:693px;top:395px;width:65px;background:linear-gradient(#fff 0,#fff 1px,transparent 1px,transparent 17px,#fff 17px);text-align:right;padding-right:2px;"><span class="sr">0,294</span></div>
<div class="cell w" id="c0_6" style="left:759px;top:395px;width:102px;background:linear-gradient(#fff 0,#fff 1px,transparent 1px,transparent 17px,#fff 17px);padding-left:2px;"><span class="s">ХБФ / БІСКВІТ-ШОКОЛАД</span></div>
<div class="cell w" id="c0_7" style="left:862px;top:395px;width:112px;background:linear-gradient(#fff 0,#fff 1px,transparent 1px,transparent 17px,#fff 17px);padding-left:3px;"><span class="s">Скорочення асортименту</span></div>
<div class="cell w" id="c0_8" style="left:975px;top:395px;width:190px;background:linear-gradient(#fff 0,#fff 1px,transparent 1px,transparent 17px,#fff 17px);padding-left:3px;"><span class="s"></span></div>
<div class="cell w" id="c0_9" style="left:1166px;top:395px;width:147px;background:linear-gradient(#fff 0,#fff 1px,transparent 1px,transparent 17px,#fff 17px);padding-left:3px;"><span class="s">1</span></div>
<div class="cell w" id="c0_10" style="left:1314px;top:395px;width:147px;background:linear-gradient(#fff 0,#fff 1px,transparent 1px,transparent 17px,#fff 17px);padding-left:3px;letter-spacing:-0.13px;"><span class="s">Звичайний товар</span></div>
<div class="cell w" id="c0_11" style="left:1462px;top:395px;width:86px;background:linear-gradient(#fff 0,#fff 1px,transparent 1px,transparent 17px,#fff 17px);padding-left:3px;"><span class="s">C</span></div>
<div class="cell w" id="c0_12" style="left:1549px;top:395px;width:51px;background:linear-gradient(#fff 0,#fff 1px,transparent 1px,transparent 17px,#fff 17px);padding-left:3px;"><span class="s">C</span></div>
<div class="a" style="left:197px;top:413px;width:1378px;height:1px;background:#d4d0c8"></div>
<div class="cell" id="c1_0" style="left:197px;top:414px;width:40px;padding-left:2px;"><span class="s">000259</span></div>
<div class="cell" id="c1_1" style="left:238px;top:414px;width:247px;padding-left:2px;letter-spacing:0.055px;"><span class="s">Цук Ранкова зірка (Morning Star) ХБФ ваг</span></div>
<div class="cell" id="c1_2" style="left:486px;top:414px;width:49px;padding-left:3px;"><span class="s">1</span></div>
<div class="cell" id="c1_3" style="left:536px;top:414px;width:76px;text-align:right;padding-right:2px;"><span class="sr">186,10</span></div>
<div class="cell" id="c1_4" style="left:613px;top:414px;width:79px;text-align:right;padding-right:2px;"><span class="sr">161,77</span></div>
<div class="cell" id="c1_5" style="left:693px;top:414px;width:65px;text-align:right;padding-right:2px;"><span class="sr">0,000</span></div>
<div class="cell" id="c1_6" style="left:759px;top:414px;width:102px;padding-left:2px;"><span class="s">ХБФ / БІСКВІТ-ШОКОЛАД</span></div>
<div class="cell" id="c1_7" style="left:862px;top:414px;width:112px;padding-left:3px;"><span class="s">Скорочення асортименту</span></div>
<div class="cell" id="c1_8" style="left:975px;top:414px;width:190px;padding-left:3px;"><span class="s"></span></div>
<div class="cell" id="c1_9" style="left:1166px;top:414px;width:147px;padding-left:3px;"><span class="s">1</span></div>
<div class="cell" id="c1_10" style="left:1314px;top:414px;width:147px;padding-left:3px;letter-spacing:-0.13px;"><span class="s">Звичайний товар</span></div>
<div class="cell" id="c1_11" style="left:1462px;top:414px;width:86px;padding-left:3px;"><span class="s">B</span></div>
<div class="cell" id="c1_12" style="left:1549px;top:414px;width:51px;padding-left:3px;"><span class="s">B</span></div>
<div class="a" style="left:197px;top:432px;width:1378px;height:1px;background:#d4d0c8"></div>
<div class="cell" id="c2_0" style="left:197px;top:433px;width:40px;padding-left:2px;"><span class="s">005015</span></div>
<div class="cell" id="c2_1" style="left:238px;top:433px;width:247px;padding-left:2px;"><span class="s">Цук Крем-Суфле желейне тропік ТМ АВК ваг</span></div>
<div class="cell" id="c2_2" style="left:486px;top:433px;width:49px;padding-left:3px;"><span class="s">1</span></div>
<div class="cell" id="c2_3" style="left:536px;top:433px;width:76px;text-align:right;padding-right:2px;"><span class="sr">104,50</span></div>
<div class="cell" id="c2_4" style="left:613px;top:433px;width:79px;text-align:right;padding-right:2px;"><span class="sr">94,94</span></div>
<div class="cell" id="c2_5" style="left:693px;top:433px;width:65px;text-align:right;padding-right:2px;"><span class="sr">0,000</span></div>
<div class="cell" id="c2_6" style="left:759px;top:433px;width:102px;padding-left:2px;"><span class="s">АВК</span></div>
<div class="cell" id="c2_7" style="left:862px;top:433px;width:112px;padding-left:3px;"><span class="s">Скорочення асортименту</span></div>
<div class="cell" id="c2_8" style="left:975px;top:433px;width:190px;padding-left:3px;"><span class="s">ТзОВ Продмаркет Плюс</span></div>
<div class="cell" id="c2_9" style="left:1166px;top:433px;width:147px;padding-left:3px;"><span class="s">11</span></div>
<div class="cell" id="c2_10" style="left:1314px;top:433px;width:147px;padding-left:3px;letter-spacing:-0.13px;"><span class="s">Звичайний товар</span></div>
<div class="cell" id="c2_11" style="left:1462px;top:433px;width:86px;padding-left:3px;"><span class="s"></span></div>
<div class="cell" id="c2_12" style="left:1549px;top:433px;width:51px;padding-left:3px;"><span class="s"></span></div>
<div class="a" style="left:197px;top:451px;width:1378px;height:1px;background:#d4d0c8"></div>
<div class="cell" id="c3_0" style="left:197px;top:452px;width:40px;padding-left:2px;"><span class="s">002704</span></div>
<div class="cell" id="c3_1" style="left:238px;top:452px;width:247px;padding-left:2px;letter-spacing:0.18px;"><span class="s">Цукерка Тортюфель Київський ваг/Шокобум/</span></div>
<div class="cell" id="c3_2" style="left:486px;top:452px;width:49px;padding-left:3px;"><span class="s">2</span></div>
<div class="cell" id="c3_3" style="left:536px;top:452px;width:76px;text-align:right;padding-right:2px;"><span class="sr">87,00</span></div>
<div class="cell" id="c3_4" style="left:613px;top:452px;width:79px;text-align:right;padding-right:2px;"><span class="sr">60,00</span></div>
<div class="cell" id="c3_5" style="left:693px;top:452px;width:65px;text-align:right;padding-right:2px;"><span class="sr">0,000</span></div>
<div class="cell" id="c3_6" style="left:759px;top:452px;width:102px;padding-left:2px;padding-left:7px;letter-spacing:-0.12px;"><span class="s">ТзОВ ТВК Волді (Шокобум)</span></div>
<div class="cell" id="c3_7" style="left:862px;top:452px;width:112px;padding-left:3px;"><span class="s">Скорочення асортименту</span></div>
<div class="cell" id="c3_8" style="left:975px;top:452px;width:190px;padding-left:3px;"><span class="s">ФОП Курілін</span></div>
<div class="cell" id="c3_9" style="left:1166px;top:452px;width:147px;padding-left:3px;"><span class="s">25,118</span></div>
<div class="cell" id="c3_10" style="left:1314px;top:452px;width:147px;padding-left:3px;letter-spacing:-0.13px;"><span class="s">Звичайний товар</span></div>
<div class="cell" id="c3_11" style="left:1462px;top:452px;width:86px;padding-left:3px;"><span class="s">A</span></div>
<div class="cell" id="c3_12" style="left:1549px;top:452px;width:51px;padding-left:3px;"><span class="s">A</span></div>
<div class="a" style="left:197px;top:470px;width:1378px;height:1px;background:#d4d0c8"></div>
<div class="a" style="left:237px;top:394px;width:1px;height:81px;background:#d4d0c8"></div>
<div class="a" style="left:485px;top:394px;width:1px;height:81px;background:#d4d0c8"></div>
<div class="a" style="left:535px;top:394px;width:1px;height:81px;background:#d4d0c8"></div>
<div class="a" style="left:612px;top:394px;width:1px;height:81px;background:#d4d0c8"></div>
<div class="a" style="left:692px;top:394px;width:1px;height:81px;background:#d4d0c8"></div>
<div class="a" style="left:758px;top:394px;width:1px;height:81px;background:#d4d0c8"></div>
<div class="a" style="left:861px;top:394px;width:1px;height:81px;background:#d4d0c8"></div>
<div class="a" style="left:974px;top:394px;width:1px;height:81px;background:#d4d0c8"></div>
<div class="a" style="left:1165px;top:394px;width:1px;height:81px;background:#d4d0c8"></div>
<div class="a" style="left:1313px;top:394px;width:1px;height:81px;background:#d4d0c8"></div>
<div class="a" style="left:1461px;top:394px;width:1px;height:81px;background:#d4d0c8"></div>
<div class="a" style="left:1548px;top:394px;width:1px;height:81px;background:#d4d0c8"></div>
<div class="a" style="left:197px;top:394px;width:1378px;height:1px;background:#d4d0c8"></div>
<div class="a" style="left:238px;top:395px;width:247px;height:1px;background:#000"></div>
<div class="a" style="left:238px;top:412px;width:247px;height:1px;background:#000"></div>
</div></body></html>
